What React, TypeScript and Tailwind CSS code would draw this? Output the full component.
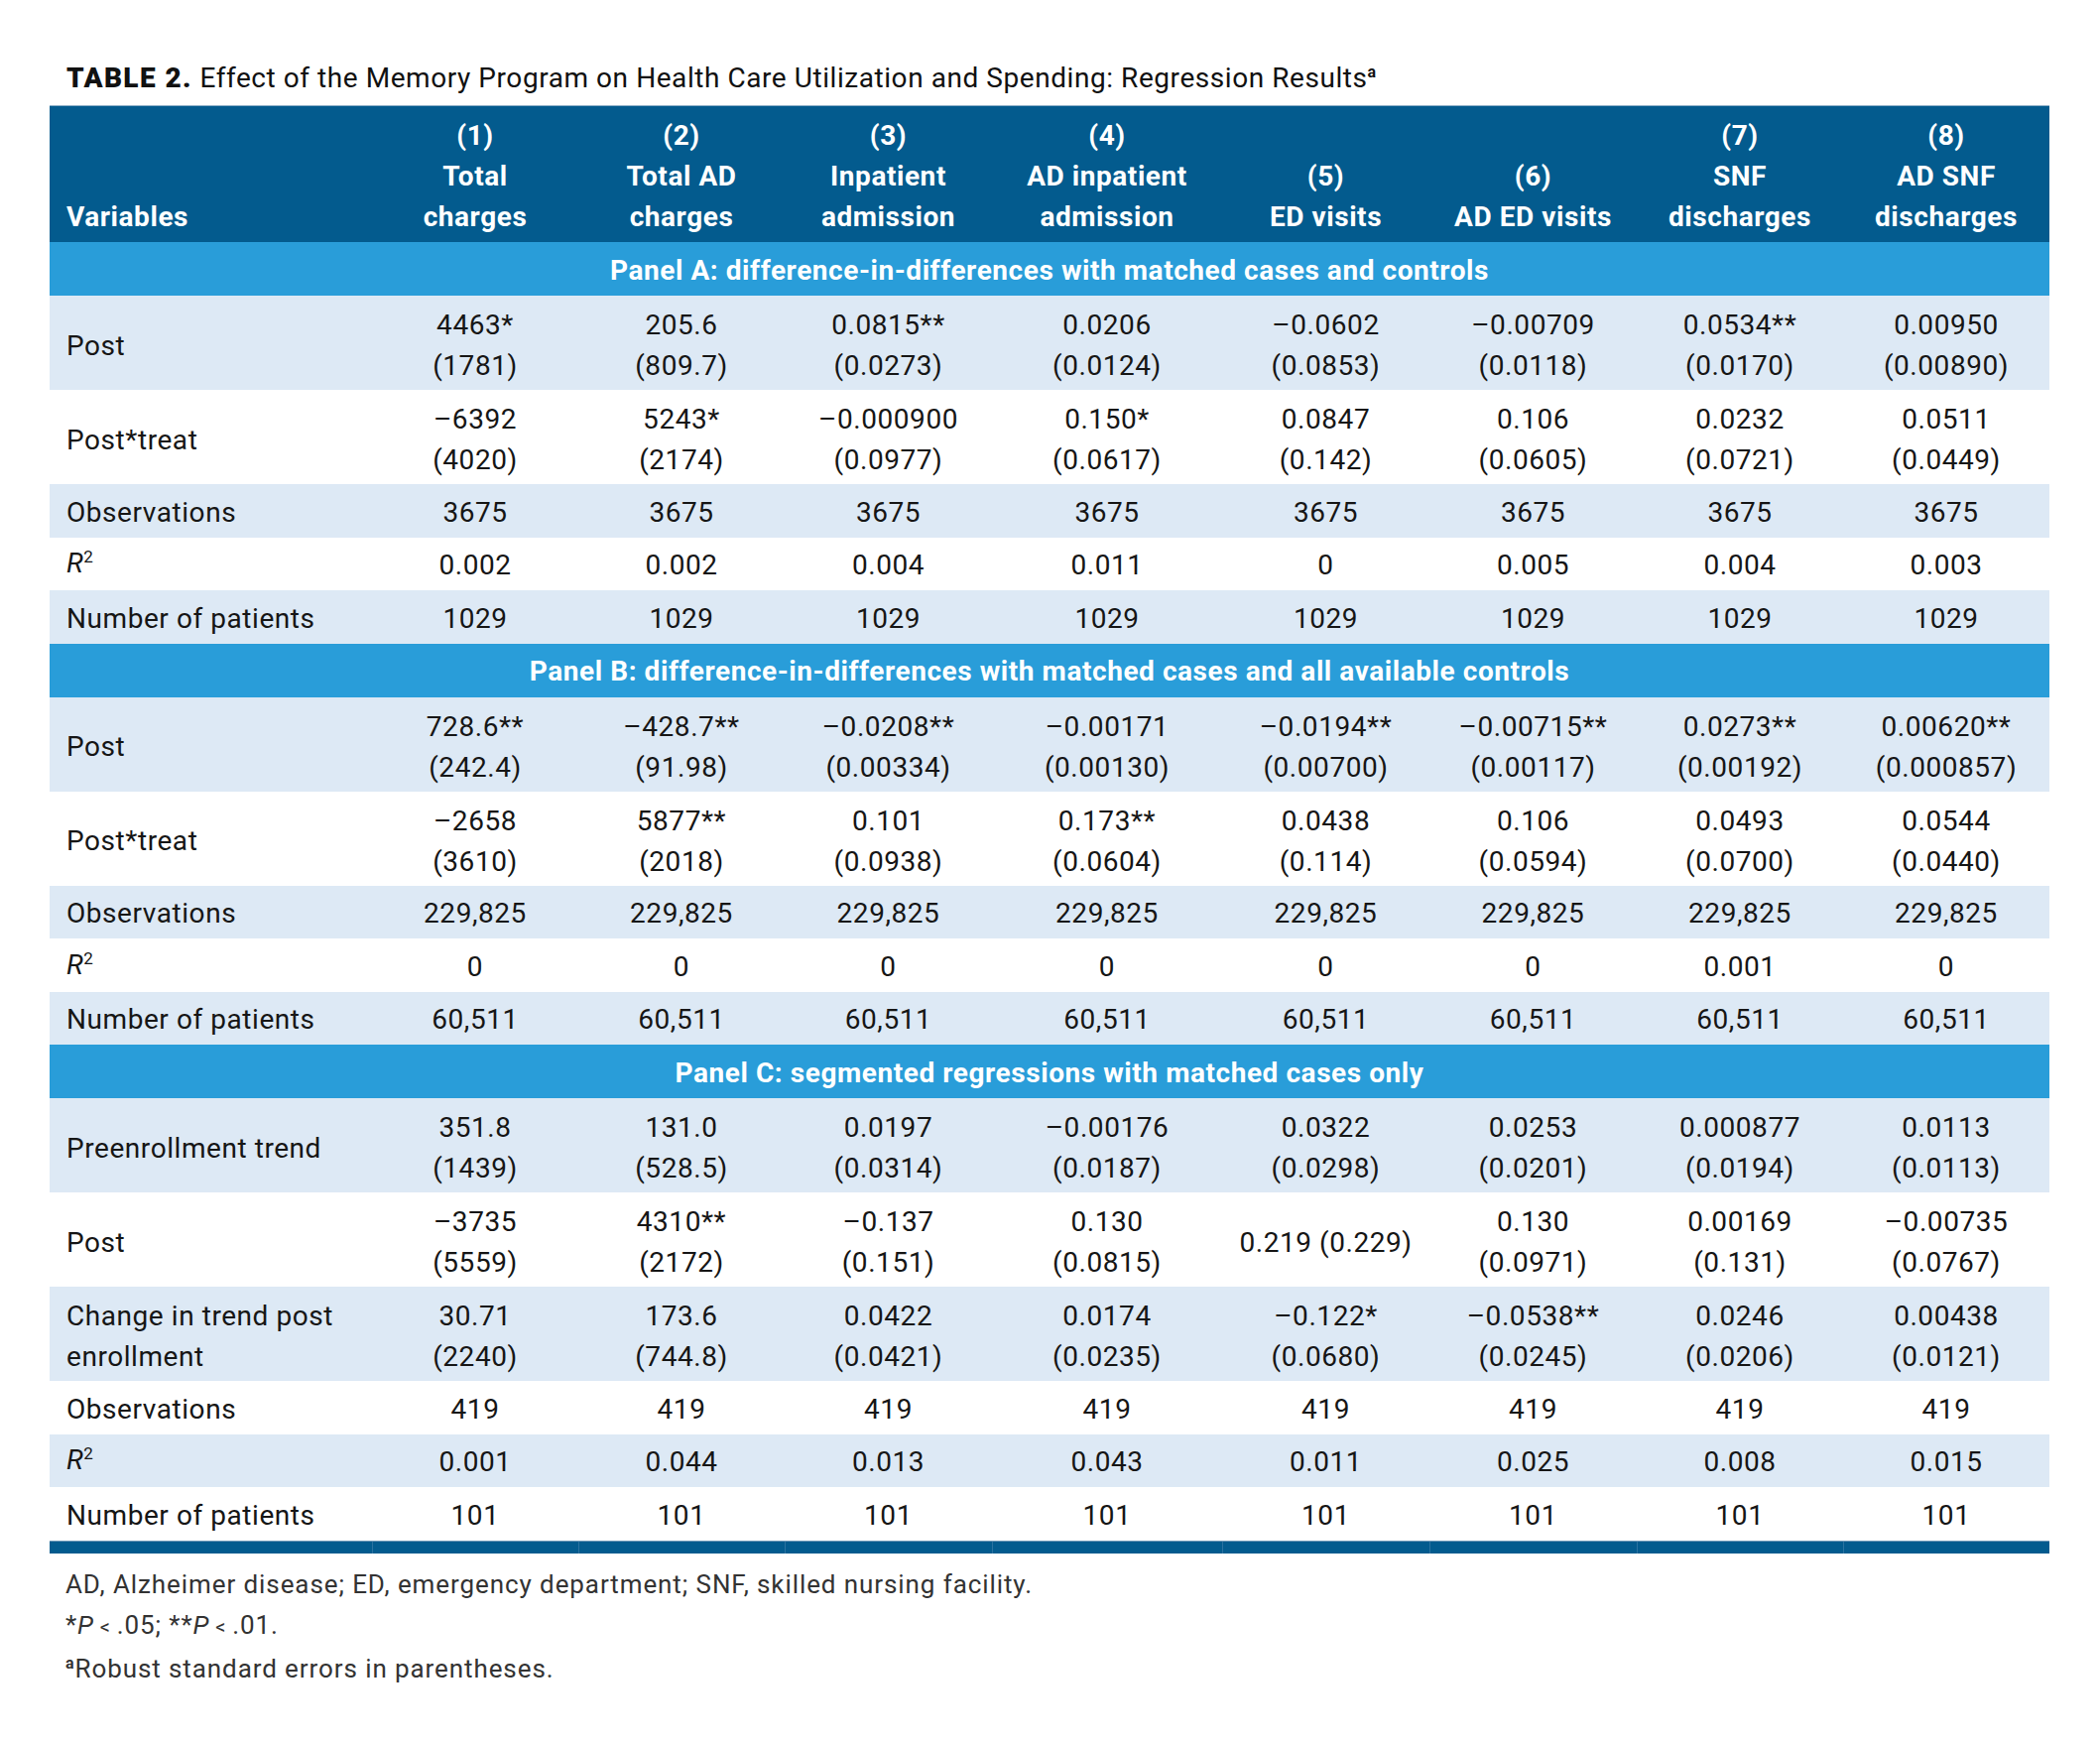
import React from "react";

type Cell = string | [string, string];

const GRID =
  "grid grid-cols-[325px_208px_208px_209px_232px_209px_209px_208px_208px]";

const headers: string[][] = [
  ["(1)", "Total", "charges"],
  ["(2)", "Total AD", "charges"],
  ["(3)", "Inpatient", "admission"],
  ["(4)", "AD inpatient", "admission"],
  ["(5)", "ED visits"],
  ["(6)", "AD ED visits"],
  ["(7)", "SNF", "discharges"],
  ["(8)", "AD SNF", "discharges"],
];

const R2 = (
  <span>
    <i>R</i>
    <span className="relative -top-[10px] text-[17px]">2</span>
  </span>
);

type RowDef = { label: React.ReactNode; cells: Cell[]; tall?: boolean };

const rep = (v: string): Cell[] => Array.from({ length: 8 }, () => v);

const panelA: RowDef[] = [
  {
    label: "Post",
    tall: true,
    cells: [
      ["4463*", "(1781)"],
      ["205.6", "(809.7)"],
      ["0.0815**", "(0.0273)"],
      ["0.0206", "(0.0124)"],
      ["–0.0602", "(0.0853)"],
      ["–0.00709", "(0.0118)"],
      ["0.0534**", "(0.0170)"],
      ["0.00950", "(0.00890)"],
    ],
  },
  {
    label: "Post*treat",
    tall: true,
    cells: [
      ["–6392", "(4020)"],
      ["5243*", "(2174)"],
      ["–0.000900", "(0.0977)"],
      ["0.150*", "(0.0617)"],
      ["0.0847", "(0.142)"],
      ["0.106", "(0.0605)"],
      ["0.0232", "(0.0721)"],
      ["0.0511", "(0.0449)"],
    ],
  },
  { label: "Observations", cells: rep("3675") },
  {
    label: R2,
    cells: ["0.002", "0.002", "0.004", "0.011", "0", "0.005", "0.004", "0.003"],
  },
  { label: "Number of patients", cells: rep("1029") },
];

const panelB: RowDef[] = [
  {
    label: "Post",
    tall: true,
    cells: [
      ["728.6**", "(242.4)"],
      ["–428.7**", "(91.98)"],
      ["–0.0208**", "(0.00334)"],
      ["–0.00171", "(0.00130)"],
      ["–0.0194**", "(0.00700)"],
      ["–0.00715**", "(0.00117)"],
      ["0.0273**", "(0.00192)"],
      ["0.00620**", "(0.000857)"],
    ],
  },
  {
    label: "Post*treat",
    tall: true,
    cells: [
      ["–2658", "(3610)"],
      ["5877**", "(2018)"],
      ["0.101", "(0.0938)"],
      ["0.173**", "(0.0604)"],
      ["0.0438", "(0.114)"],
      ["0.106", "(0.0594)"],
      ["0.0493", "(0.0700)"],
      ["0.0544", "(0.0440)"],
    ],
  },
  { label: "Observations", cells: rep("229,825") },
  { label: R2, cells: ["0", "0", "0", "0", "0", "0", "0.001", "0"] },
  { label: "Number of patients", cells: rep("60,511") },
];

const panelC: RowDef[] = [
  {
    label: "Preenrollment trend",
    tall: true,
    cells: [
      ["351.8", "(1439)"],
      ["131.0", "(528.5)"],
      ["0.0197", "(0.0314)"],
      ["–0.00176", "(0.0187)"],
      ["0.0322", "(0.0298)"],
      ["0.0253", "(0.0201)"],
      ["0.000877", "(0.0194)"],
      ["0.0113", "(0.0113)"],
    ],
  },
  {
    label: "Post",
    tall: true,
    cells: [
      ["–3735", "(5559)"],
      ["4310**", "(2172)"],
      ["–0.137", "(0.151)"],
      ["0.130", "(0.0815)"],
      "0.219 (0.229)",
      ["0.130", "(0.0971)"],
      ["0.00169", "(0.131)"],
      ["–0.00735", "(0.0767)"],
    ],
  },
  {
    label: (
      <span>
        Change in trend post
        <br />
        enrollment
      </span>
    ),
    tall: true,
    cells: [
      ["30.71", "(2240)"],
      ["173.6", "(744.8)"],
      ["0.0422", "(0.0421)"],
      ["0.0174", "(0.0235)"],
      ["–0.122*", "(0.0680)"],
      ["–0.0538**", "(0.0245)"],
      ["0.0246", "(0.0206)"],
      ["0.00438", "(0.0121)"],
    ],
  },
  { label: "Observations", cells: rep("419") },
  {
    label: R2,
    cells: ["0.001", "0.044", "0.013", "0.043", "0.011", "0.025", "0.008", "0.015"],
  },
  { label: "Number of patients", cells: rep("101") },
];

function Row({ row, shade }: { row: RowDef; shade: boolean }) {
  return (
    <div
      className={`${GRID} ${shade ? "bg-[#dde9f5]" : "bg-white"} ${
        row.tall ? "h-[95px] pt-[5px]" : "h-[53.5px] pt-[3px]"
      } text-[28px] leading-[41px] tracking-[0.02em] text-[#161616]`}
    >
      <div className="flex items-center pl-[17px] whitespace-nowrap">
        {row.label}
      </div>
      {row.cells.map((c, i) => (
        <div
          key={i}
          className="flex flex-col items-center justify-center whitespace-nowrap"
        >
          {Array.isArray(c) ? (
            <>
              <span>{c[0]}</span>
              <span>{c[1]}</span>
            </>
          ) : (
            <span>{c}</span>
          )}
        </div>
      ))}
    </div>
  );
}

function Band({ text }: { text: string }) {
  return (
    <div className="h-[54px] bg-[#299dd9] flex items-center justify-center text-white font-bold text-[28px] leading-[41px] tracking-[0.02em] pt-[2px]">
      {text}
    </div>
  );
}

function Panel({ rows, startShaded }: { rows: RowDef[]; startShaded: boolean }) {
  return (
    <>
      {rows.map((r, i) => (
        <Row key={i} row={r} shade={startShaded ? i % 2 === 0 : i % 2 === 1} />
      ))}
    </>
  );
}

export default function App() {
  return (
    <div className="w-[2117px] min-h-[1755px] bg-white pl-[50px] pt-[55px] font-['Roboto','Liberation_Sans',sans-serif] text-[#161616]">
      <div className="h-[51px] pl-[17px] text-[28px] leading-[48px] whitespace-nowrap text-[#111] tracking-[0.02em]">
        <span className="font-black tracking-[0.05em]">TABLE 2.</span>{" "}
        <span>
          Effect of the Memory Program on Health Care Utilization and Spending:
          Regression Results
        </span>
        <span className="relative -top-[10px] text-[16px] font-bold">a</span>
      </div>

      <div className="w-[2016px]">
        <div
          className={`${GRID} h-[138px] bg-[#035b8e] border-t border-[#8fb0c8] text-white font-bold text-[28px] leading-[41px] tracking-[0.02em]`}
        >
          <div className="flex items-end pl-[17px] pb-[5px]">Variables</div>
          {headers.map((h, i) => (
            <div
              key={i}
              className="flex flex-col items-center justify-end pb-[5px] whitespace-nowrap"
            >
              {h.map((t, j) => (
                <span key={j}>{t}</span>
              ))}
            </div>
          ))}
        </div>

        <Band text="Panel A: difference-in-differences with matched cases and controls" />
        <Panel rows={panelA} startShaded={true} />
        <Band text="Panel B: difference-in-differences with matched cases and all available controls" />
        <Panel rows={panelB} startShaded={true} />
        <Band text="Panel C: segmented regressions with matched cases only" />
        <Panel rows={panelC} startShaded={true} />

        <div className={`${GRID} h-[13px] bg-[#035b8e] border-t border-[#6f98b8]`}>
          {Array.from({ length: 9 }, (_, i) => (
            <div
              key={i}
              className={i === 0 ? "" : "border-l border-[#2b72a0]"}
            />
          ))}
        </div>
      </div>

      <div className="mt-[11px] pl-[16px] text-[26px] leading-[41.5px] tracking-[0.035em] text-[#333]">
        <div>
          AD, Alzheimer disease; ED, emergency department; SNF, skilled nursing
          facility.
        </div>
        <div>
          *<i>P</i>
          <span className="text-[20px]"> &lt; </span>.05; **<i>P</i>
          <span className="text-[20px]"> &lt; </span>.01.
        </div>
        <div>
          <span className="relative -top-[9px] text-[16px] font-bold">a</span>
          Robust standard errors in parentheses.
        </div>
      </div>
    </div>
  );
}
